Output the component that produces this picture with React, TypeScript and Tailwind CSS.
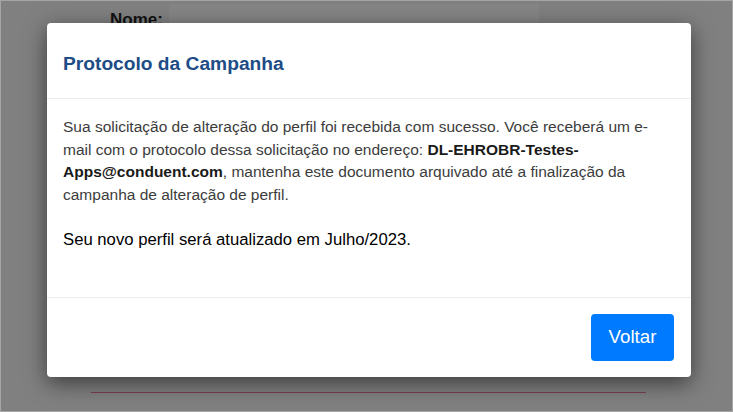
export default function App() {
  return (
    <div className="relative h-[412px] w-[733px] overflow-hidden border border-[#a5a5a5] bg-[#808080] font-['Liberation_Sans',Arial,sans-serif]">
      {/* page content behind the dim overlay */}
      <div className="flex h-full flex-col">
        <div className="flex items-start pl-[109px] pt-[3px]">
          <span className="pt-[6px] text-[17px] font-bold leading-[20px] text-[#111]">Nome:</span>
          <div className="ml-[6px] h-[20px] w-[370px] bg-[#858585]" />
        </div>
        <div className="flex-1" />
        <div className="mb-[18px] ml-[90px] h-px w-[555px] bg-[#7d3f5a]" />
      </div>

      {/* modal layer */}
      <div className="absolute inset-0 pl-[46px] pt-[22px]">
        <div className="flex w-[644px] flex-col rounded-[4px] bg-white shadow-[0_6px_22px_rgba(0,0,0,0.55)]">
          <div className="border-b border-[#e9ecef] px-[16px] pb-[23px] pt-[29px]">
            <h1 className="text-[19.2px] font-bold leading-[23px] text-[#1d4c86]">Protocolo da Campanha</h1>
          </div>
          <div className="h-[198px] px-[16px] pt-[17px]">
            <p className="text-[15.5px] leading-[22.5px] text-[#3c3c3c]">
              Sua solicitação de alteração do perfil foi recebida com sucesso. Você receberá um e-mail com o protocolo dessa solicitação no endereço:{" "}
              <b className="font-bold text-[#1a1a1a]">DL-EHROBR-Testes-Apps@conduent.com</b>, mantenha este documento arquivado até a finalização da campanha de alteração de perfil.
            </p>
            <p className="mt-[22px] text-[16.7px] leading-[24px] text-black">Seu novo perfil será atualizado em Julho/2023.</p>
          </div>
          <div className="flex justify-end border-t border-[#ececec] px-[17px] pb-[16px] pt-[16px]">
            <button className="h-[47px] w-[83px] rounded-[4px] bg-[#007bff] text-[18.7px] text-white">Voltar</button>
          </div>
        </div>
      </div>
    </div>
  );
}
